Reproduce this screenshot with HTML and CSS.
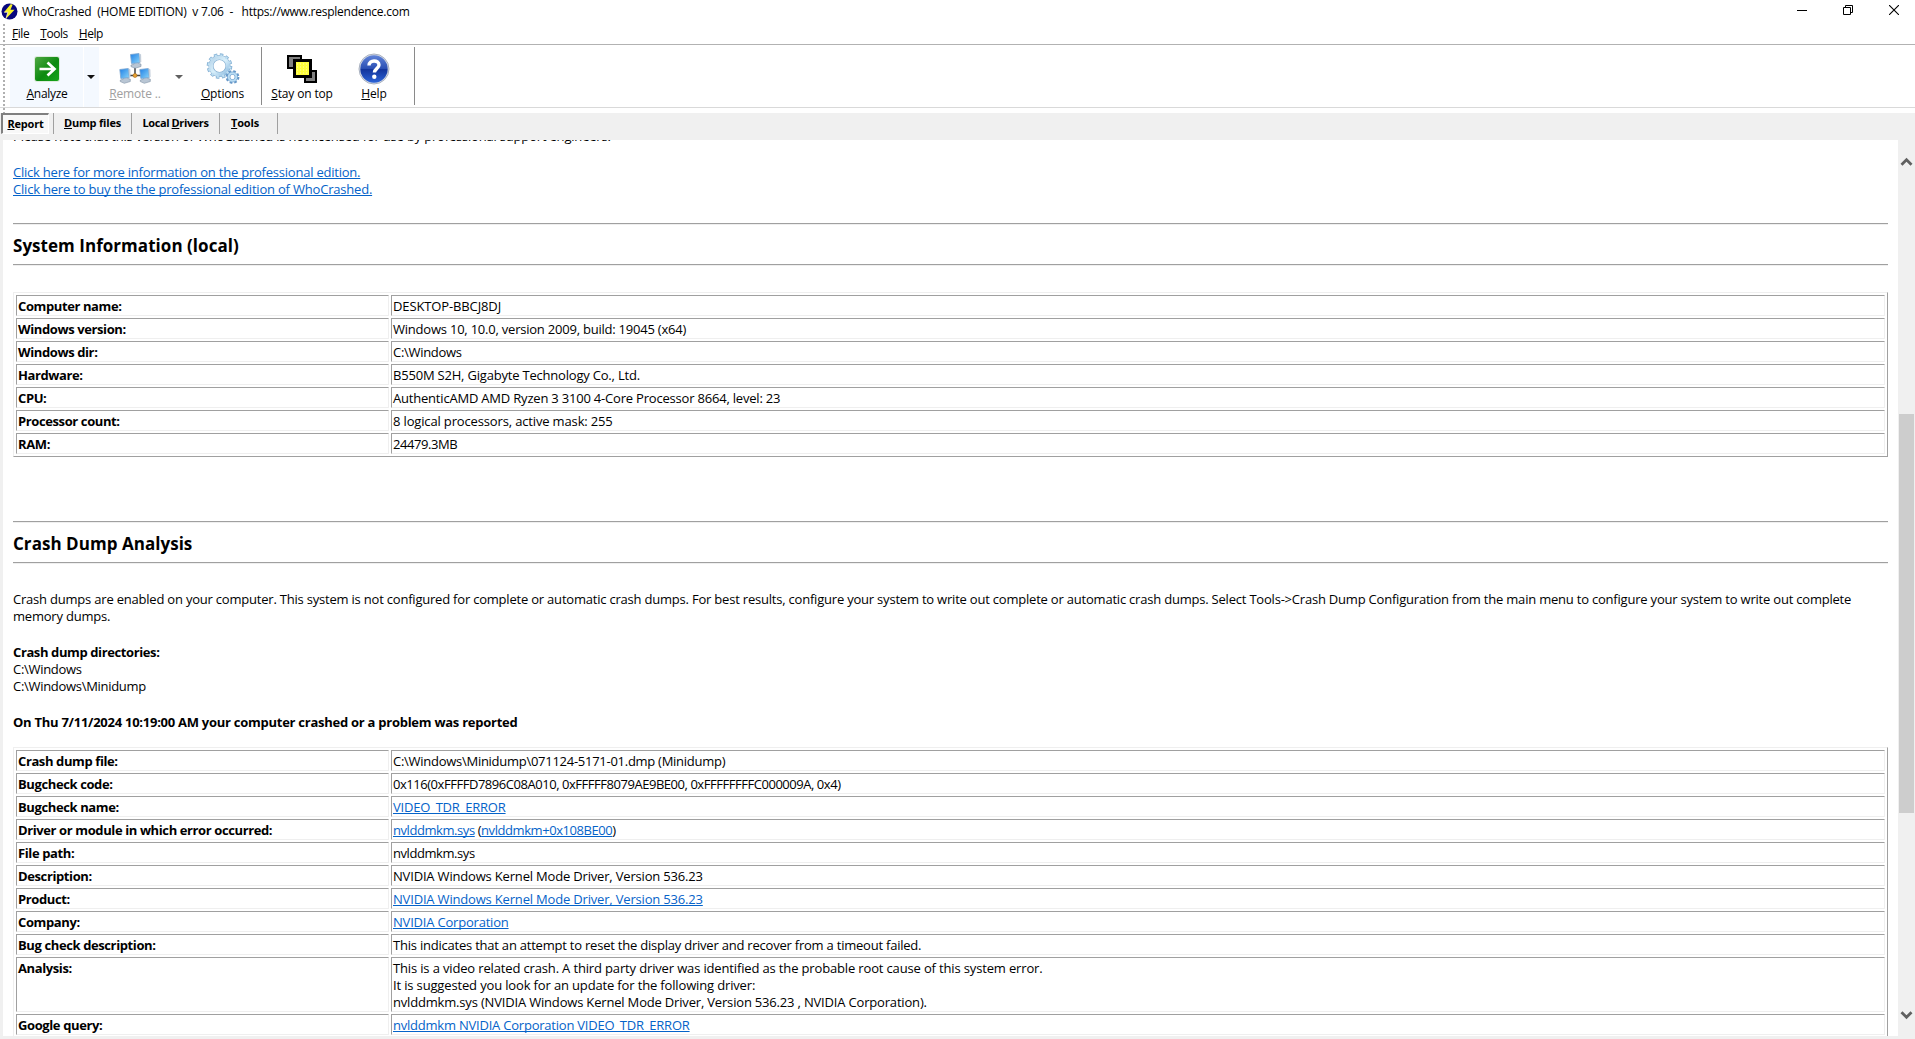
FILE: index.html
```html
<!DOCTYPE html>
<html lang="en">
<head>
<meta charset="utf-8">
<title>WhoCrashed</title>
<link rel="stylesheet" href="styles.css">
</head>
<body>
<div class="window">
  <header class="titlebar">
    <svg class="app-icon" width="17" height="17" viewBox="0 0 17 17"><circle cx="8.5" cy="8.5" r="8" fill="#07077d"/><path d="M9.6 1.2 3 9.2h3.8L5 15.8l8.6-9H9.5l2.2-5.4z" fill="#f6f02a"/><path d="M3.2 9.2h3.6L5 15.8" fill="none" stroke="#fffbd0" stroke-width=".8"/></svg>
    <span class="title">WhoCrashed&nbsp; (HOME EDITION)&nbsp; v 7.06&nbsp; -&nbsp;&nbsp; https://www.resplendence.com</span>
    <div class="controls">
      <svg width="10" height="10" viewBox="0 0 10 10"><path d="M0 5.5h10" stroke="#000"/></svg>
      <svg width="10" height="10" viewBox="0 0 10 10" fill="none" stroke="#000"><path d="M.5 2.5h7v7h-7zM2.5 2.5v-2h7v7h-2"/></svg>
      <svg width="10" height="10" viewBox="0 0 10 10"><path d="M0 0l10 10M10 0L0 10" stroke="#000" stroke-width="1.1"/></svg>
    </div>
  </header>

  <div class="bars">
    <nav class="menubar"><span><u>F</u>ile</span><span><u>T</u>ools</span><span><u>H</u>elp</span></nav>
    <div class="toolbar">
      <div class="tool hot analyze">
        <svg width="32" height="32" viewBox="0 0 32 32"><defs><linearGradient id="ga" x1="0" y1="0" x2="1" y2="1"><stop offset="0" stop-color="#4fa843"/><stop offset=".55" stop-color="#0c8a10"/><stop offset="1" stop-color="#16a51a"/></linearGradient></defs><rect x="3" y="3" width="26" height="26" rx="3" fill="#dcebdc"/><rect x="4" y="4" width="24" height="24" rx="2" fill="url(#ga)"/><path d="M8.500 16h14M16.500 9.500l7 6.500-7 6.500" fill="none" stroke="#fff" stroke-width="2.700"/></svg>
        <span><u>A</u>nalyze</span>
      </div>
      <div class="drop hot"><i></i></div>
      <div class="tool off">
        <svg width="32" height="32" viewBox="0 0 32 32"><defs><linearGradient id="gs" x1="0" y1="0" x2="1" y2="1"><stop offset="0" stop-color="#1f7fe6"/><stop offset="1" stop-color="#8bd6fa"/></linearGradient>
          <g id="pc"><path d="M3.500 9l4-.4.500 1.400 2.500.6v2.400l-6 1.800-4-1.700v-1.600l3-.8z" fill="#b9c6d4" stroke="#7f92a6" stroke-width=".6"/><path d="M0 1l8.500-1 1 9-8.500 1z" fill="url(#gs)" stroke="#7ba5cf" stroke-width=".8"/><path d="M9 0l1.600 1 .2 7.600-1.500.5z" fill="#c3ceda"/></g></defs>
          <path d="M16 14v8M8 22.500h16" stroke="#444" stroke-width="1.500"/><use href="#pc" x="11.500" y="0.500"/><use href="#pc" x="0.800" y="15.500"/><use href="#pc" x="20.800" y="15.500"/><circle cx="16" cy="22.500" r="2" fill="#e8a132" stroke="#a86a14" stroke-width=".6"/></svg>
        <span><u>R</u>emote ..</span>
      </div>
      <div class="drop off"><i></i></div>
      <div class="tool opt">
        <svg width="34" height="32" viewBox="0 0 34 32"><defs><linearGradient id="gg" x1="0" y1="0" x2="1" y2="1"><stop offset="0" stop-color="#b5d3e9"/><stop offset=".5" stop-color="#d9f0fb"/><stop offset="1" stop-color="#8ab9df"/></linearGradient></defs>
          <g fill="none"><circle cx="13.500" cy="13" r="11" stroke="#87b3d6" stroke-width="3.600" stroke-dasharray="3.300 2.460"/><circle cx="13.500" cy="13" r="8.500" stroke="#82add0" stroke-width="5"/><circle cx="13.500" cy="13" r="8.600" stroke="url(#gg)" stroke-width="4"/><circle cx="13.500" cy="13" r="10.600" stroke="#c0dff2" stroke-width="2.600" stroke-dasharray="2 3.550" stroke-dashoffset="-.6"/>
          <circle cx="26.500" cy="24" r="5.600" stroke="#6798c8" stroke-width="2.600" stroke-dasharray="2.500 1.900"/><circle cx="26.500" cy="24" r="3.800" stroke="#6d9fcd" stroke-width="3.200"/><circle cx="26.500" cy="24" r="3.800" stroke="#b9dcf3" stroke-width="2"/></g></svg>
        <span><u>O</u>ptions</span>
      </div>
      <div class="sep"></div>
      <div class="tool stay">
        <svg width="32" height="32" viewBox="0 0 32 32"><g stroke="#000" stroke-width="2"><path d="M2 3h13v12H2z" fill="#808080"/><path d="M19 18h11v11H19z" fill="#808080"/></g><path d="M8.500 7.500h16v16h-16z" fill="#ffff3c" stroke="#000" stroke-width="3"/><path d="M11 11h11M11 14h11M11 17h11M11 20h11" stroke="#fffbb4" stroke-dasharray="1 2"/></svg>
        <span><u>S</u>tay on top</span>
      </div>
      <div class="tool help">
        <svg width="32" height="32" viewBox="0 0 32 32"><defs><linearGradient id="gh" x1="0" y1="0" x2="0" y2="1"><stop offset="0" stop-color="#5f82d8"/><stop offset=".48" stop-color="#2b50b4"/><stop offset=".52" stop-color="#12349c"/><stop offset="1" stop-color="#2c63d6"/></linearGradient></defs><circle cx="16" cy="16" r="15" fill="#d5dbe6" stroke="#a9b1c0" stroke-width="1"/><circle cx="16" cy="16" r="13.700" fill="url(#gh)"/><path d="M11 12.500C11 6.500 21 6.500 21 12c0 3.500-4.600 3.700-4.600 7.500" fill="none" stroke="#fff" stroke-width="3.400"/><circle cx="16.300" cy="23.700" r="2.200" fill="#fff"/></svg>
        <span><u>H</u>elp</span>
      </div>
      <div class="sep"></div>
    </div>
  </div>

  <nav class="tabs">
    <span class="tab t1 active"><u>R</u>eport</span><span class="tab t2"><u>D</u>ump files</span><span class="tab t3">Local <u>D</u>rivers</span><span class="tab t4"><u>T</u>ools</span>
  </nav>

  <div class="view">
    <main class="page">
      <p class="first">Please note that this version of WhoCrashed is not licensed for use by professional support engineers.</p>
      <p class="links"><a class="lk1">Click here for more information on the professional edition.</a><br><a>Click here to buy the the professional edition of WhoCrashed.</a></p>

      <section class="head sys"><h2>System Information (local)</h2></section>
      <table>
        <tr><th>Computer name:</th><td class="v-host">DESKTOP-BBCJ8DJ</td></tr>
        <tr><th>Windows version:</th><td class="v-ver">Windows 10, 10.0, version 2009, build: 19045 (x64)</td></tr>
        <tr><th>Windows dir:</th><td class="v-path">C:\Windows</td></tr>
        <tr><th>Hardware:</th><td>B550M S2H, Gigabyte Technology Co., Ltd.</td></tr>
        <tr><th>CPU:</th><td>AuthenticAMD AMD Ryzen 3 3100 4-Core Processor 8664, level: 23</td></tr>
        <tr><th>Processor count:</th><td class="v-text">8 logical processors, active mask: 255</td></tr>
        <tr><th>RAM:</th><td class="v-mod">24479.3MB</td></tr>
      </table>

      <section class="head crash"><h2>Crash Dump Analysis</h2></section>
      <p class="intro">Crash dumps are enabled on your computer. This system is not configured for complete or automatic crash dumps. For best results, configure your system to write out complete or automatic crash dumps. Select Tools-&gt;Crash Dump Configuration from the main menu to configure your system to write out complete<br>memory dumps.</p>
      <p class="dirs"><b>Crash dump directories:</b><br>C:\Windows<br>C:\Windows\Minidump</p>
      <p class="when"><b>On Thu 7/11/2024 10:19:00 AM your computer crashed or a problem was reported</b></p>
      <table>
        <tr><th>Crash dump file:</th><td class="v-file">C:\Windows\Minidump\071124-5171-01.dmp (Minidump)</td></tr>
        <tr><th>Bugcheck code:</th><td class="v-code">0x116(0xFFFFD7896C08A010, 0xFFFFF8079AE9BE00, 0xFFFFFFFFC000009A, 0x4)</td></tr>
        <tr><th>Bugcheck name:</th><td><a>VIDEO_TDR_ERROR</a></td></tr>
        <tr><th>Driver or module in which error occurred:</th><td class="v-mod"><a>nvlddmkm.sys</a> (<a>nvlddmkm+0x108BE00</a>)</td></tr>
        <tr><th>File path:</th><td class="v-mod">nvlddmkm.sys</td></tr>
        <tr><th>Description:</th><td class="v-desc">NVIDIA Windows Kernel Mode Driver, Version 536.23</td></tr>
        <tr><th>Product:</th><td class="v-desc"><a>NVIDIA Windows Kernel Mode Driver, Version 536.23</a></td></tr>
        <tr><th>Company:</th><td><a>NVIDIA Corporation</a></td></tr>
        <tr><th>Bug check description:</th><td class="v-ver">This indicates that an attempt to reset the display driver and recover from a timeout failed.</td></tr>
        <tr><th>Analysis:</th><td class="v-text">This is a video related crash. A third party driver was identified as the probable root cause of this system error.<br>It is suggested you look for an update for the following driver:<br><span class="v-desc">nvlddmkm.sys (NVIDIA Windows Kernel Mode Driver, Version 536.23 , NVIDIA Corporation).</span></td></tr>
        <tr><th>Google query:</th><td class="v-ver"><a>nvlddmkm NVIDIA Corporation VIDEO_TDR_ERROR</a></td></tr>
      </table>
    </main>
    <div class="scrollbar">
      <svg width="13" height="10" viewBox="0 0 13 10"><path d="M1.500 7.800l5-5 5 5" fill="none" stroke="#606060" stroke-width="2.800"/></svg>
      <div class="track"><div class="thumb"></div></div>
      <svg width="13" height="10" viewBox="0 0 13 10"><path d="M1.500 2.200l5 5 5-5" fill="none" stroke="#606060" stroke-width="2.800"/></svg>
    </div>
  </div>
</div>
</body>
</html>
```
FILE: styles.css
```css
* { box-sizing: border-box; }
body { margin: 0; background: #f0f0f0; color: #000; font: 12px "Open Sans", "Noto Sans", sans-serif; overflow: hidden; }
.window { display: flex; flex-direction: column; width: 1915px; height: 1039px; }
u { text-decoration: underline; text-decoration-thickness: 1px; text-underline-offset: 1px; text-decoration-skip-ink: none; }

.titlebar { display: flex; align-items: center; height: 24px; background: #fff; padding-left: 1px; }
.app-icon { margin-top: -2px; }
.title { margin-left: 4px; white-space: pre; letter-spacing: -.25px; line-height: 24px; }
.controls { margin-left: auto; display: flex; gap: 36px; padding-right: 16px; margin-top: -4px; }

.bars { background: #fff; height: 89px; padding-left: 10px; background-image: radial-gradient(circle at 1px 1px, #b0b0b0 1px, transparent 1.3px); background-size: 4px 4px; background-repeat: repeat-y; background-position: 3px 0; }
.menubar { display: flex; gap: 11px; height: 20px; padding-left: 2px; line-height: 20px; letter-spacing: -.45px; }
.toolbar { display: flex; height: 64px; margin: 0 0 0 -10px; padding: 2px 0 0 10px; border-top: 1px solid #b2b2b2; border-bottom: 1px solid #d9d9d9; }
.tool { width: 72px; display: flex; flex-direction: column; align-items: center; padding-top: 6px; letter-spacing: -.15px; }
.tool span { line-height: 18px; white-space: nowrap; }
.hot { background: #f4f9ff; }
.analyze { width: 73px; padding-left: 1px; letter-spacing: -.3px; }
.drop { width: 17px; padding: 28px 0 0 4px; }
.drop.hot { border-left: 1px solid #fff; width: 16px; padding-left: 3px; }
.drop i { display: block; width: 0; border: 4px solid transparent; border-top-color: #111; border-bottom: 0; }
.drop.off i { border-top-color: #606060; }
.off span { color: #a0a0a0; }
.opt { margin-left: -3px; width: 75px; }
.sep { width: 1px; height: 58px; background: #8a8a8a; }
.opt + .sep { margin-left: 1px; }
.stay { width: 82px; }
.help { width: 62px; margin-right: 8px; }
.stay, .help { position: relative; left: -1px; }

.tabs { display: flex; height: 27px; font-size: 11px; font-weight: 700; letter-spacing: -.4px; line-height: 20px; padding-left: 1px; }
.tab { height: 21px; border-right: 1px solid #a0a0a0; text-align: center; white-space: nowrap; }
.tab.active { border: 1px solid #808080; border-width: 2px 1px 1px 2px; border-bottom-color: #fff; border-right-color: #fff; background: #f8f8f8; width: 48px; height: 21px; line-height: 17px; margin-right: 4px; letter-spacing: -.2px; }
.t2 { width: 79px; border-left: 1px solid #a0a0a0; letter-spacing: -.2px; }
.t3 { width: 88px; }
.t4 { width: 58px; padding-right: 7px; letter-spacing: -.2px; }

.view { display: flex; height: 896px; margin-left: 3px; background: #fff; overflow: hidden; }
.page { flex: 1; padding: 0 10px; font-size: 13px; line-height: 17px; letter-spacing: -.2px; height: 896px; overflow: hidden; }
.page p { margin: 0; white-space: nowrap; }
a { color: #0563c9; text-decoration: underline; text-underline-offset: 1px; text-decoration-thickness: 1px; text-decoration-skip-ink: none; }
.page .first { margin-top: -12px; letter-spacing: -.19px; }
.page .links { margin-top: 19px; }
.lk1 { letter-spacing: -.22px; }
.head { border: 1px solid #a0a0a0; border-width: 1px 0; box-shadow: 0 1px #efefef, inset 0 1px #efefef; height: 42px; }
.head h2 { margin: 0; font-size: 17px; line-height: 44px; letter-spacing: .04px; }
.sys { margin: 25px 0 27px; }
.crash { margin: 64px 0 28px; }
.page .intro { letter-spacing: -.208px; }
.page .dirs { margin-top: 19px; letter-spacing: -.3px; }
.page .when { margin: 19px 0 16px; }
b, th { font-weight: 700; letter-spacing: -.39px; }
.when b { letter-spacing: -.26px; }

table { width: 1875px; table-layout: fixed; border: 1px solid; border-color: #efefef #a0a0a0 #a0a0a0 #efefef; border-spacing: 2px; }
th, td { border: 1px solid; border-color: #a0a0a0 #efefef #efefef #a0a0a0; padding: 2px 1px 0; text-align: left; vertical-align: top; white-space: nowrap; }
th { width: 373px; }
.v-host { letter-spacing: -.12px; }
.v-code { letter-spacing: -.46px; }
.v-text { letter-spacing: -.15px; }
.v-ver { letter-spacing: -.22px; }
.v-file { letter-spacing: -.27px; }
.v-mod { letter-spacing: -.43px; }
.v-path { letter-spacing: -.3px; }
.v-desc { letter-spacing: -.18px; }

.scrollbar { width: 17px; background: #f0f0f0; display: flex; flex-direction: column; align-items: center; padding: 17px 0 16px; }
.track { flex: 1; width: 15px; padding-top: 247px; }
.thumb { height: 399px; background: #cdcdcd; }
```
